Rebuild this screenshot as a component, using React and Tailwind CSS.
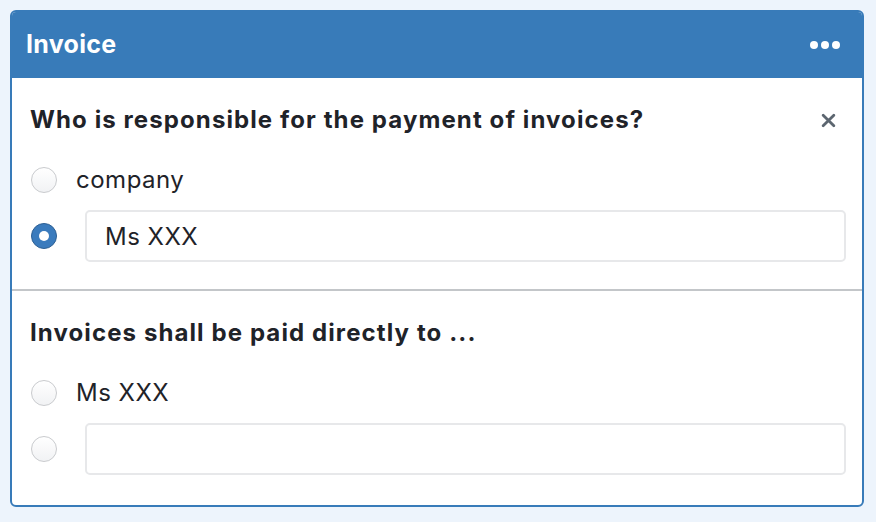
import React, { useState } from 'react';

const Radio = ({ checked, onClick }) => (
    <button
        type="button"
        onClick={onClick}
        className={
            checked
                ? 'w-[26px] h-[26px] shrink-0 rounded-full bg-[#3a7bbd] border border-[#2c5f93] flex items-center justify-center'
                : 'w-[26px] h-[26px] shrink-0 rounded-full bg-gradient-to-b from-white to-[#f1f2f4] border border-[#c9cbce]'
        }
    >
        {checked && <span className="block w-[10px] h-[10px] rounded-full bg-white"></span>}
    </button>
);

const Question = ({ title, options, value, onChange, closable, className }) => (
    <div className={'pl-[18px] pr-[16px] ' + className}>
        <div className="flex items-center justify-between h-[32px]">
            <h2 className="text-[24px] font-bold text-[#1f2329] tracking-[1.1px] leading-[32px]">{title}</h2>
            {closable && (
                <button className="text-[#5c6670] mr-[10px]">
                    <svg width="15" height="15" viewBox="0 0 14 14">
                        <path d="M2 2L12 12M12 2L2 12" stroke="currentColor" strokeWidth="2.6" strokeLinecap="round" />
                    </svg>
                </button>
            )}
        </div>
        <div className="mt-[18px] flex flex-col gap-[4px]">
            {options.map((opt, i) => (
                <div key={i} className="flex items-center pl-[1px] h-[52px]">
                    <Radio checked={value === i} onClick={() => onChange(i)} />
                    {opt.input ? (
                        <input
                            type="text"
                            defaultValue={opt.label}
                            className="ml-[28px] flex-1 h-[52px] px-[18px] rounded-[5px] border-2 border-[#e7e8ea] bg-white text-[24px] tracking-[0.5px] text-[#1f2329] outline-none"
                        />
                    ) : (
                        <span className="ml-[19px] text-[24px] tracking-[0.5px] text-[#1f2329]">{opt.label}</span>
                    )}
                </div>
            ))}
        </div>
    </div>
);

export default function App() {
    const [payer, setPayer] = useState(1);
    const [paidTo, setPaidTo] = useState(-1);

    return (
        <div className="min-h-[522px] bg-[#edf4fc] pl-[10px] pr-[12px] pt-[10px] pb-[16px] font-['Inter',sans-serif]">
            <div className="rounded-[6px] border-2 border-[#387bb9] bg-white overflow-hidden">
                <div className="h-[66px] bg-[#387bb9] flex items-center justify-between pl-[14px] pr-[22px]">
                    <h1 className="text-[25px] font-bold text-white tracking-[0.3px]">Invoice</h1>
                    <div className="flex gap-[3px]">
                        <span className="w-[8px] h-[8px] rounded-full bg-white"></span>
                        <span className="w-[8px] h-[8px] rounded-full bg-white"></span>
                        <span className="w-[8px] h-[8px] rounded-full bg-white"></span>
                    </div>
                </div>
                <Question
                    className="pt-[26px] pb-[27px]"
                    title="Who is responsible for the payment of invoices?"
                    closable
                    value={payer}
                    onChange={setPayer}
                    options={[{ label: 'company' }, { label: 'Ms XXX', input: true }]}
                />
                <div className="h-[2px] bg-[#c3c6c9]"></div>
                <Question
                    className="pt-[26px] pb-[30px]"
                    title="Invoices shall be paid directly to ..."
                    value={paidTo}
                    onChange={setPaidTo}
                    options={[{ label: 'Ms XXX' }, { label: '', input: true }]}
                />
            </div>
        </div>
    );
}
